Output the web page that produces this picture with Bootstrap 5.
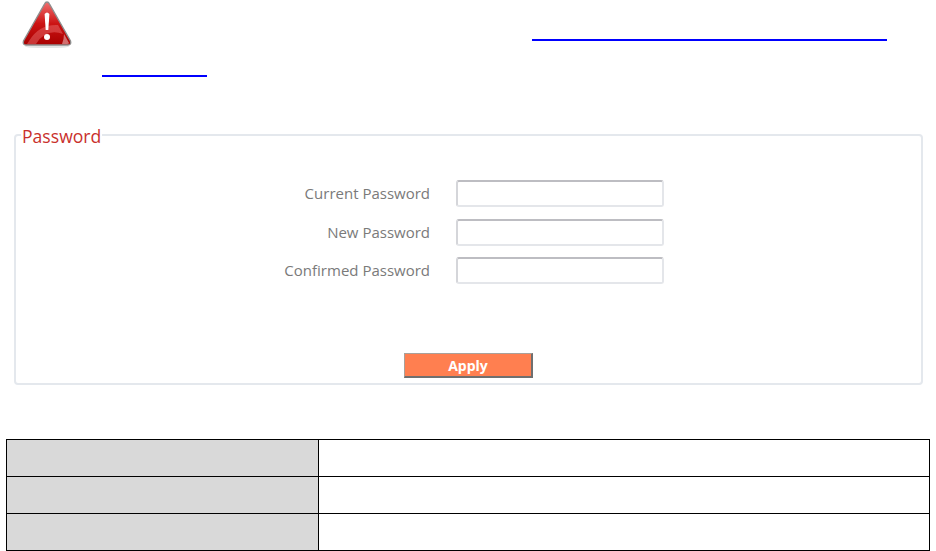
<!DOCTYPE html>
<html lang="en">
<head>
    <meta charset="UTF-8">
    <meta name="viewport" content="width=device-width, initial-scale=1.0">
    <title>Password</title>
    <link href="https://cdn.jsdelivr.net/npm/bootstrap@5.3.0/dist/css/bootstrap.min.css" rel="stylesheet">
    <style>
        body {
            font-family: "Open Sans", "Liberation Sans", sans-serif;
            background-color: #fff;
            height: 551px;
            overflow: hidden;
        }
        .page-wrap {
            padding: 1px 6px 0 6px;
        }
        .note-row {
            height: 123px;
        }
        .warn-icon {
            width: 50px;
            height: 48px;
            margin-left: 16px;
            display: block;
        }
        .link-line {
            display: block;
            height: 2px;
            background-color: #0000ff;
        }
        .link-one {
            width: 355px;
            margin-left: 526px;
            margin-top: -10px;
        }
        .link-two {
            width: 105px;
            margin-left: 96px;
            margin-top: 34px;
        }
        .pw-box {
            margin: 0 7px 0 8px;
            height: 261px;
            border: 2px solid #e4e8ed;
            border-radius: 4px;
            padding: 0;
            min-width: 0;
        }
        .pw-box legend {
            float: none;
            width: auto;
            font-size: 17.6px;
            line-height: 20px;
            color: #c9302c;
            margin: 0 0 0 5px;
            padding: 2px 1px 0 1px;
        }
        .pw-form {
            padding-top: 34px;
            display: grid;
            grid-template-columns: 414px 208px;
            column-gap: 26px;
            row-gap: 11.5px;
            align-items: center;
        }
        .pw-label {
            text-align: right;
            font-size: 15px;
            color: #7a7a7a;
            margin: 0;
        }
        .pw-input {
            height: 27px;
            padding: 0 4px;
            border: 2px solid #e4e6ea;
            border-top-color: #bdbdc2;
            border-left-color: #d5d6da;
            border-radius: 3px;
            box-shadow: none;
        }
        .apply-row {
            padding-top: 69px;
            padding-left: 388px;
        }
        .apply-btn {
            display: block;
            width: 129px;
            height: 25px;
            padding: 0;
            font-size: 14px;
            line-height: 21px;
            font-weight: 700;
            color: #fff;
            background-color: #ff7f50;
            border: 1px solid #a9a09a;
            border-right: 2px solid #6f6f6f;
            border-bottom: 2px solid #6f6f6f;
            border-radius: 0;
        }
        .info-table {
            margin: 54px 0 0 0;
            width: 924px;
            height: 112px;
            table-layout: fixed;
            border-collapse: collapse;
        }
        .info-table td {
            border: 1px solid #000;
            height: 37px;
            padding: 0;
        }
        .info-table td.key-cell {
            width: 312px;
            background-color: #d9d9d9;
        }
    </style>
</head>
<body>
    <div class="page-wrap">
        <div class="note-row">
            <svg class="warn-icon" viewBox="0 0 50 48">
                <defs>
                    <linearGradient id="redFill" x1="0" y1="0" x2="0" y2="1">
                        <stop offset="0" stop-color="#f07070"/>
                        <stop offset="0.5" stop-color="#cc1414"/>
                        <stop offset="1" stop-color="#a80000"/>
                    </linearGradient>
                </defs>
                <ellipse cx="25" cy="45.5" rx="22" ry="1.6" fill="#e4e4e4"/>
                <path d="M25 1 Q26.5 1 27.5 3 L48.5 40 Q49.5 44 46 44 L4 44 Q0.500 44 1.500 40 L22.500 3 Q23.500 1 25 1Z" fill="url(#redFill)" stroke="#8f8f8f" stroke-width="1.400"/>
                <path d="M7 40 Q17 23 36 24 L41 33 Q24 27 14 43 L5 43Z" fill="#e86a6a" opacity="0.500"/>
                <path d="M40 43 Q42 38 42 33 L47 42 Q47 43 45 43Z" fill="#dc8a8a" opacity="0.800"/>
                <path d="M22.600 13 Q25 10 27.400 13 L26.300 29 L23.700 29Z" fill="#fff"/>
                <circle cx="25" cy="36" r="3" fill="#fff"/>
            </svg>
            <a href="#" class="link-line link-one"></a>
            <a href="#" class="link-line link-two"></a>
        </div>

        <fieldset class="pw-box">
            <legend>Password</legend>
            <div class="pw-form">
                <label class="pw-label">Current Password</label>
                <input type="password" class="form-control pw-input">
                <label class="pw-label">New Password</label>
                <input type="password" class="form-control pw-input">
                <label class="pw-label">Confirmed Password</label>
                <input type="password" class="form-control pw-input">
            </div>
            <div class="apply-row">
                <button type="button" class="btn apply-btn">Apply</button>
            </div>
        </fieldset>

        <table class="info-table">
            <tr><td class="key-cell"></td><td></td></tr>
            <tr><td class="key-cell"></td><td></td></tr>
            <tr><td class="key-cell"></td><td></td></tr>
        </table>
    </div>
    <script src="https://cdn.jsdelivr.net/npm/bootstrap@5.3.0/dist/js/bootstrap.bundle.min.js"></script>
</body>
</html>
